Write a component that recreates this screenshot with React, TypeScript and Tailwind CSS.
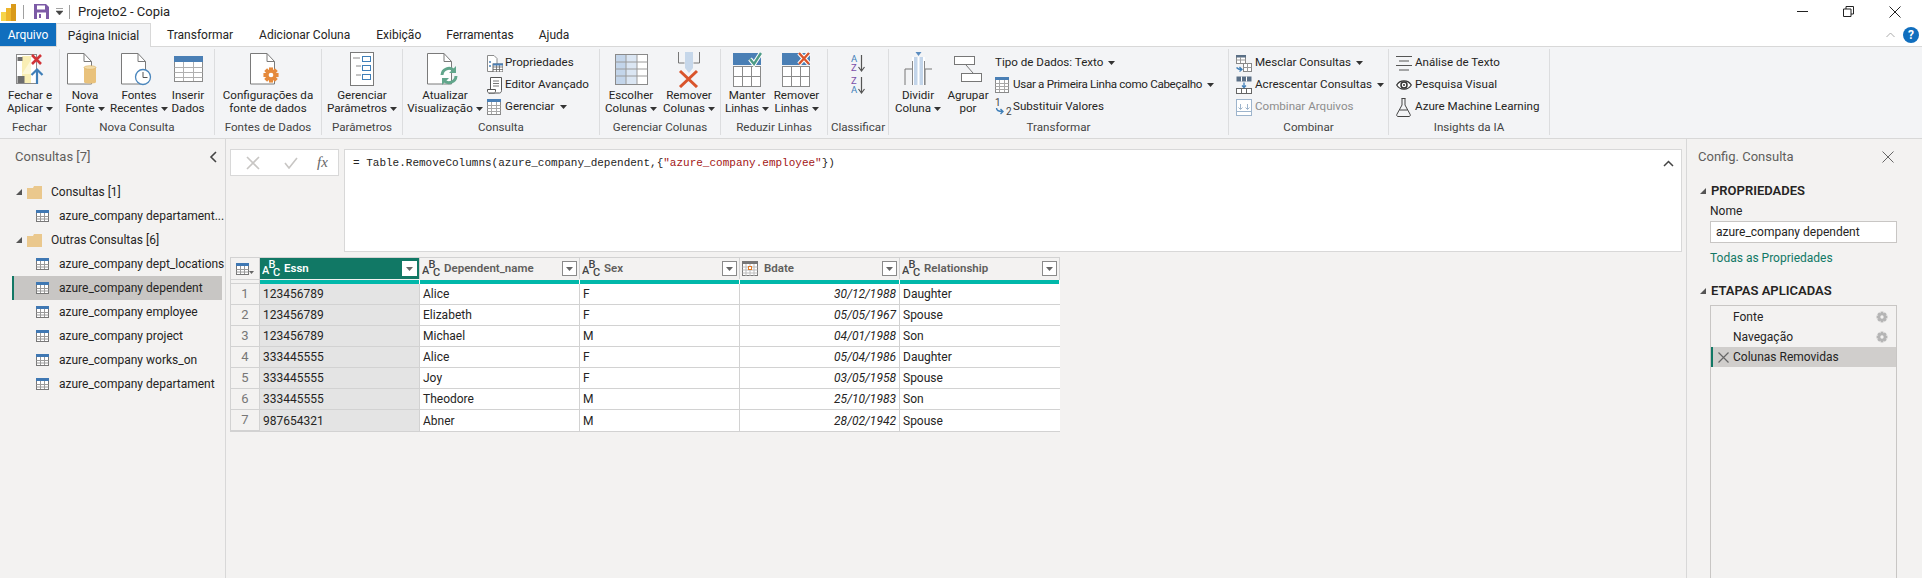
import type { ReactNode } from "react";

const sans = "font-['Roboto',sans-serif]";

function Caret({ color = "#333" }: { color?: string }) {
  return (
    <svg width="7" height="4" viewBox="0 0 7 4" className="inline-block shrink-0">
      <path d="M0 0h7L3.5 4z" fill={color} />
    </svg>
  );
}

function Doc({ children, w = 26, h = 34 }: { children?: ReactNode; w?: number; h?: number }) {
  return (
    <svg width={w + 12} height={h} viewBox={`0 0 ${w + 12} ${h}`} className="block">
      <path d={`M1.5 1.5H${w - 8}L${w - 0.5} 9.5V${h - 2}H1.5z`} fill="#fff" stroke="#7a7a7a" />
      <path d={`M${w - 8} 1.5V9.5H${w - 0.5}`} fill="none" stroke="#7a7a7a" />
      {children}
    </svg>
  );
}

function FecharIcon() {
  return (
    <svg width="28" height="32" viewBox="0 0 28 32" className="block">
      <rect x="0.5" y="1.5" width="20" height="29" fill="#fff" stroke="#8a8a8a" />
      <path d="M6 3h9v27H6z" fill="#f9eeb4" />
      <path d="M6 21l9-14v14z" fill="#fdf7d6" />
      <rect x="1.5" y="4" width="5" height="4" fill="#6d6d6d" />
      <rect x="1.5" y="23" width="7" height="7" fill="#6d6d6d" />
      <path d="M16 2l9 9M25 2l-9 9" stroke="#d13438" strokeWidth="2.6" />
      <path d="M21 31V17M15.5 22l5.5-5.5 5.5 5.5" stroke="#3f7fb8" strokeWidth="2.2" fill="none" />
    </svg>
  );
}

function CylinderDoc() {
  return (
    <Doc>
      <path d="M18 15.5c0-1.5 12-1.5 12 0V30c0 2-12 2-12 0z" fill="#e9c27c" />
      <ellipse cx="24" cy="15.5" rx="6" ry="1.8" fill="#f3dca9" stroke="#d9ae62" strokeWidth="0.6" />
    </Doc>
  );
}

function ClockDoc() {
  return (
    <Doc>
      <circle cx="23" cy="25" r="7.5" fill="#fff" stroke="#4a86bd" strokeWidth="1.3" />
      <path d="M23 20v5.5h4.5" fill="none" stroke="#555" />
    </Doc>
  );
}

function InsertTable() {
  return (
    <svg width="29" height="26" viewBox="0 0 29 26" className="block">
      <rect x="0.5" y="0.5" width="28" height="25" fill="#fff" stroke="#8a8a8a" />
      <rect x="0" y="0" width="29" height="6" fill="#4a7fb5" />
      <path d="M0.5 11.5h28M0.5 16.5h28M0.5 21.5h28M9.5 6v19M19.5 6v19" stroke="#b0b0b0" />
    </svg>
  );
}

function GearGlyph({ x, y, r, color, hole = "#fff" }: { x: number; y: number; r: number; color: string; hole?: string }) {
  const teeth = [0, 45, 90, 135];
  return (
    <g transform={`translate(${x} ${y})`}>
      {teeth.map((a) => (
        <rect key={a} x={-r * 0.36} y={-r * 1.35} width={r * 0.72} height={r * 2.7} fill={color} transform={`rotate(${a})`} />
      ))}
      <circle r={r} fill={color} />
      <circle r={r * 0.42} fill={hole} />
    </g>
  );
}

function GearDoc() {
  return (
    <Doc>
      <GearGlyph x={22} y={23} r={5.6} color="#e58a3c" />
    </Doc>
  );
}

function ParamIcon() {
  return (
    <svg width="24" height="34" viewBox="0 0 24 34" className="block">
      <rect x="0.5" y="0.5" width="23" height="33" fill="#fff" stroke="#7a7a7a" />
      <path d="M3 6h7M6 14h5M6 23h5" stroke="#8a8a8a" />
      <rect x="12.5" y="4.5" width="8" height="5" fill="#fff" stroke="#3f7fb8" />
      <rect x="12.5" y="13.5" width="8" height="5" fill="#fff" stroke="#3f7fb8" />
      <rect x="12.5" y="22.5" width="8" height="5" fill="#fff" stroke="#3f7fb8" />
    </svg>
  );
}

function RefreshDoc() {
  return (
    <Doc>
      <path d="M16 23a7 7 0 0 1 12-4.500M30 24a7 7 0 0 1-12 4.500" fill="none" stroke="#62a68c" strokeWidth="3" />
      <path d="M30 14v7h-7zM16 33v-7h7z" fill="#62a68c" />
    </Doc>
  );
}

function ChooseColumns() {
  return (
    <svg width="33" height="31" viewBox="0 0 33 31" className="block">
      <rect x="0.500" y="0.500" width="32" height="30" fill="#fff" stroke="#8a8a8a" />
      <rect x="1" y="1" width="10" height="29" fill="#c3d5ea" />
      <rect x="11" y="1" width="11" height="29" fill="#dbe6f3" />
      <path d="M0.500 8h32M0.500 15h32M0.500 22h32M11 1v29M22 1v29" stroke="#9a9a9a" />
    </svg>
  );
}

function RemoveColumns() {
  return (
    <svg width="24" height="37" viewBox="0 0 24 37" className="block">
      <path d="M1.500 1v11h6M22.500 1v11h-6" fill="none" stroke="#777" />
      <path d="M8 1h8v16l-4 5-4-5z" fill="#c6d7ea" />
      <path d="M3 20l17 16M20 20L3 36" stroke="#d9542b" strokeWidth="3" />
    </svg>
  );
}

function RowsIcon({ mark }: { mark: "keep" | "remove" }) {
  return (
    <svg width="29" height="36" viewBox="0 0 29 36" className="block">
      <rect x="0" y="2" width="28" height="12" fill="#4a7fb5" />
      <rect x="0.500" y="15.500" width="27" height="20" fill="#fff" stroke="#8a8a8a" />
      <path d="M0.500 25.500h27M9.500 15.500v20M18.500 15.500v20" stroke="#8a8a8a" />
      {mark === "keep" ? (
        <path d="M17 8l4 5 7-11" fill="none" stroke="#fff" strokeWidth="4.500" />
      ) : (
        <path d="M17 2l10 11M27 2L17 13" fill="none" stroke="#fff" strokeWidth="4.500" />
      )}
      {mark === "keep" ? (
        <path d="M17 8l4 5 7-11" fill="none" stroke="#4e9c86" strokeWidth="2.400" />
      ) : (
        <path d="M17 2l10 11M27 2L17 13" fill="none" stroke="#d9542b" strokeWidth="2.400" />
      )}
    </svg>
  );
}

function SortIcon({ top, bottom }: { top: string; bottom: string }) {
  return (
    <svg width="14" height="18" viewBox="0 0 14 18" className="block">
      <text x="0" y="8" fontSize="9.500" fontFamily="Roboto" fill={top === "A" ? "#3f7fb8" : "#7b4fa8"}>{top}</text>
      <text x="0" y="16.500" fontSize="9.500" fontFamily="Roboto" fill={bottom === "A" ? "#3f7fb8" : "#7b4fa8"}>{bottom}</text>
      <path d="M10.500 1v15M7.500 13l3 4 3-4" fill="none" stroke="#555" strokeWidth="1.200" />
    </svg>
  );
}

function SplitIcon() {
  return (
    <svg width="29" height="34" viewBox="0 0 29 34" className="block">
      <path d="M1 33V17h7M28 17h-7v16" fill="none" stroke="#777" />
      <path d="M8 5h13v28H8z" fill="#fff" />
      <path d="M10 5h9v28h-9z" fill="#c3d5ea" />
      <path d="M14.500 5v28" stroke="#fff" strokeWidth="2" />
      <path d="M11.500 0h6l-3 4z" fill="#5b8cc0" />
      <path d="M8.500 9v24M20.500 9v24" stroke="#888" />
    </svg>
  );
}

function GroupIcon() {
  return (
    <svg width="28" height="26" viewBox="0 0 28 26" className="block">
      <rect x="0.500" y="0.500" width="20" height="8" fill="#fff" stroke="#777" />
      <rect x="7.500" y="17.500" width="20" height="8" fill="#fff" stroke="#777" />
      <path d="M12 9l7 8" stroke="#777" fill="none" />
    </svg>
  );
}

function SmallGrid() {
  return (
    <svg width="14" height="16" viewBox="0 0 14 16" className="block">
      <rect x="0.500" y="0.500" width="13" height="15" fill="#fff" stroke="#8a8a8a" />
      <rect x="0" y="0" width="14" height="3" fill="#4a7fb5" />
      <path d="M0.500 6.500h13M0.500 9.500h13M0.500 12.500h13M4.500 3v12M9.500 3v12" stroke="#a8a8a8" />
    </svg>
  );
}

function PropsIcon() {
  return (
    <svg width="16" height="17" viewBox="0 0 16 17" className="block">
      <path d="M0.500 0.500H7L10 3.500V16.500H0.500z" fill="#fff" stroke="#8a8a8a" />
      <circle cx="3" cy="7" r="1" fill="#4a7fb5" />
      <circle cx="3" cy="11" r="1" fill="#4a7fb5" />
      <rect x="6" y="9" width="10" height="8" fill="#fff" stroke="#666" />
      <path d="M6 12h10M6 14.500h10M9.500 9v8M12.500 9v8" stroke="#666" strokeWidth="0.800" />
      <rect x="6" y="8.500" width="10" height="2" fill="#4a7fb5" />
    </svg>
  );
}

function EditorIcon() {
  return (
    <svg width="15" height="17" viewBox="0 0 15 17" className="block">
      <path d="M3.500 0.500H14.500V13.500c0 1.500-1 2.500-2 2.500H2c1.500 0 1.500-1 1.500-2z" fill="#fff" stroke="#555" />
      <path d="M0.500 12.500h8v1.500c0 1-.5 2-1.500 2H2c-1 0-1.500-1-1.500-2z" fill="#fff" stroke="#555" />
      <path d="M6 4h6M6 6.500h6M6 9h6" stroke="#777" />
    </svg>
  );
}

function MergeIcon() {
  return (
    <svg width="16" height="17" viewBox="0 0 16 17" className="block">
      <rect x="0.500" y="0.500" width="9" height="8" fill="#fff" stroke="#888" />
      <rect x="0" y="0" width="10" height="2.500" fill="#5a6f86" />
      <path d="M0.500 5h9M4.500 2v6" stroke="#999" />
      <rect x="7.500" y="8.500" width="8" height="8" fill="#fff" stroke="#888" />
      <path d="M7.500 12.500h8M11.500 8.500v8" stroke="#999" />
      <path d="M0.500 12.500c1.500 2 3 2 5 2M3.500 12l2.500 2.500-2.500 2" stroke="#3f7fb8" fill="none" strokeWidth="1.300" />
    </svg>
  );
}

function AppendIcon() {
  return (
    <svg width="16" height="18" viewBox="0 0 16 18" className="block">
      <rect x="0.500" y="0.500" width="15" height="5" fill="#5a6f86" />
      <path d="M5.500 0.500v5M10.500 0.500v5" stroke="#fff" />
      <rect x="0.500" y="12.500" width="15" height="5" fill="#fff" stroke="#666" />
      <path d="M5.500 12.500v5M10.500 12.500v5" stroke="#666" />
      <path d="M8 6.500v4.500M6 9.500l2 2 2-2" stroke="#3f7fb8" fill="none" strokeWidth="1.300" />
    </svg>
  );
}

function CombineIcon() {
  return (
    <svg width="16" height="17" viewBox="0 0 16 17" className="block">
      <rect x="0.500" y="0.500" width="15" height="16" fill="#fff" stroke="#9db4cc" />
      <path d="M0.500 12.500h15M4.500 5v5M2.500 8.500l2 2 2-2M11.500 5v5M9.500 8.500l2 2 2-2" stroke="#9db4cc" fill="none" />
    </svg>
  );
}

function ReplaceIcon() {
  return (
    <svg width="18" height="18" viewBox="0 0 18 18" className="block">
      <text x="0" y="8" fontSize="10" fontFamily="Roboto" fill="#444">1</text>
      <text x="11" y="17" fontSize="10" fontFamily="Roboto" fill="#444">2</text>
      <path d="M1.500 10c0 3 2 3.500 6 3.500M5.500 11l2.500 2.500L5.500 16" fill="none" stroke="#3f7fb8" strokeWidth="1.400" />
    </svg>
  );
}

function LinesIcon() {
  return (
    <svg width="16" height="17" viewBox="0 0 16 17" className="block">
      <path d="M0 1.500h16M3 6h10M0 10.500h16M3 15h10" stroke="#555" />
    </svg>
  );
}

function EyeIcon() {
  return (
    <svg width="16" height="12" viewBox="0 0 16 12" className="block">
      <path d="M0.700 6C4 .5 12 .5 15.300 6 12 11.500 4 11.500 0.700 6z" fill="#fff" stroke="#333" strokeWidth="1.200" />
      <circle cx="8" cy="6" r="3" fill="none" stroke="#333" strokeWidth="1.500" />
      <circle cx="8" cy="6" r="1" fill="#333" />
    </svg>
  );
}

function FlaskIcon() {
  return (
    <svg width="15" height="19" viewBox="0 0 15 19" className="block">
      <path d="M5.500 0.500h4M6 0.500V7L0.800 16.500c-.4 1 .2 2 1.200 2h11c1 0 1.600-1 1.200-2L9 7V0.500" fill="none" stroke="#444" />
      <path d="M3.500 12h8" stroke="#444" />
    </svg>
  );
}

function Group({ label, width, children, row = true }: { label: string; width: number; children: ReactNode; row?: boolean }) {
  return (
    <div style={{ width }} className="flex h-[86px] shrink-0 flex-col border-r border-[#dcdddf]">
      <div className={row ? "flex h-[72px] items-start" : "h-[72px]"}>{children}</div>
      <div className="flex h-[14px] items-center justify-center text-[#444] whitespace-nowrap">{label}</div>
    </div>
  );
}

function BigBtn({ w, icon, l1, l2, caret }: { w: number; icon: ReactNode; l1: string; l2: string; caret?: boolean }) {
  return (
    <div style={{ width: w }} className="flex shrink-0 flex-col items-center">
      <div className="flex h-[40px] items-center justify-center">{icon}</div>
      <div className="text-center leading-[13px] whitespace-nowrap">{l1}</div>
      <div className="flex items-center justify-center gap-[3px] leading-[13px] whitespace-nowrap">
        {l2}
        {caret && <Caret />}
      </div>
    </div>
  );
}

function SmallBtn({ icon, text, caret, iconW = 18, muted, tight }: { icon?: ReactNode; text: string; caret?: boolean; iconW?: number; muted?: boolean; tight?: boolean }) {
  return (
    <div className={`flex h-[22px] items-center whitespace-nowrap ${muted ? "text-[#8d8d8d]" : ""}`}>
      {icon && <div style={{ width: iconW }} className="flex shrink-0 items-center">{icon}</div>}
      <span className={tight ? "tracking-[-0.3px]" : ""}>{text}</span>
      {caret && <span className="ml-[5px] flex"><Caret /></span>}
    </div>
  );
}

function TableGlyph() {
  return (
    <svg width="13" height="12" viewBox="0 0 13 12" className="block shrink-0">
      <rect x="0.500" y="0.500" width="12" height="11" fill="#fff" stroke="#777" />
      <rect x="0" y="0" width="13" height="3" fill="#3f78b3" />
      <path d="M0.500 6.500h12M0.500 9h12M4.500 3v8M8.500 3v8" stroke="#9a9a9a" />
    </svg>
  );
}

function Folder() {
  return (
    <svg width="15" height="13" viewBox="0 0 15 13" className="block shrink-0">
      <path d="M0 2h6l1-2h8v13H0z" fill="#eac88d" />
    </svg>
  );
}

function TreeArrow() {
  return (
    <svg width="6" height="6" viewBox="0 0 6 6" className="block shrink-0">
      <path d="M6 0v6H0z" fill="#555" />
    </svg>
  );
}

function AbcIcon({ color = "#444" }: { color?: string }) {
  return (
    <svg width="19" height="20" viewBox="0 0 19 20" className="block shrink-0">
      <text x="0" y="15" fontSize="11" fontFamily="Roboto" fontWeight="500" fill={color}>A</text>
      <text x="6.500" y="9" fontSize="11" fontFamily="Roboto" fontWeight="500" fill={color}>B</text>
      <text x="11" y="17" fontSize="11" fontFamily="Roboto" fontWeight="500" fill={color}>C</text>
    </svg>
  );
}

function DateIcon() {
  return (
    <svg width="16" height="15" viewBox="0 0 16 15" className="mr-[3px] block shrink-0">
      <rect x="0.500" y="0.500" width="15" height="14" fill="#fff" stroke="#777" />
      <rect x="0" y="0" width="16" height="3" fill="#777" />
      <path d="M0.500 6h15M0.500 9h15M0.500 12h15M4 3v12M8 3v12M12 3v12" stroke="#bbb" />
      <rect x="6.500" y="5.500" width="3" height="3" fill="#fff" stroke="#e07b28" />
    </svg>
  );
}

function FilterBtn({ active }: { active?: boolean }) {
  return (
    <div className={`flex h-[15px] w-[15px] shrink-0 items-center justify-center border ${active ? "border-white bg-white" : "border-[#8a8a8a] bg-white"}`}>
      <svg width="7" height="4" viewBox="0 0 7 4" className="block">
        <path d="M0 0h7L3.500 4z" fill="#666" />
      </svg>
    </div>
  );
}

const queries = ["azure_company dept_locations", "azure_company dependent", "azure_company employee", "azure_company project", "azure_company works_on", "azure_company departament"];

const rows = [
  ["123456789", "Alice", "F", "30/12/1988", "Daughter"],
  ["123456789", "Elizabeth", "F", "05/05/1967", "Spouse"],
  ["123456789", "Michael", "M", "04/01/1988", "Son"],
  ["333445555", "Alice", "F", "05/04/1986", "Daughter"],
  ["333445555", "Joy", "F", "03/05/1958", "Spouse"],
  ["333445555", "Theodore", "M", "25/10/1983", "Son"],
  ["987654321", "Abner", "M", "28/02/1942", "Spouse"],
];

const columns = [
  { name: "Essn", active: true },
  { name: "Dependent_name" },
  { name: "Sex" },
  { name: "Bdate", date: true },
  { name: "Relationship" },
];

export default function App() {
  return (
    <div className={`flex h-[578px] w-[1922px] flex-col overflow-hidden bg-[#f3f2f1] text-[12px] text-[#252423] ${sans}`}>
      {/* Title bar */}
      <div className="flex h-[23px] items-center bg-white">
        <svg width="16" height="18" viewBox="0 0 16 18" className="ml-px block">
          <rect x="0" y="9" width="5" height="9" fill="#f6d44a" />
          <rect x="5" y="5" width="5" height="13" fill="#edb52c" />
          <rect x="10" y="1" width="5" height="17" fill="#d99a1a" />
        </svg>
        <div className="ml-[6px] h-[14px] w-px bg-[#a0a0a0]" />
        <svg width="15" height="15" viewBox="0 0 15 15" className="ml-[10px] block">
          <path d="M0 0h12l3 3v12H0z" fill="#7c5aa6" />
          <rect x="3" y="1.500" width="8" height="4" fill="#fff" />
          <rect x="3" y="8.500" width="9" height="6.500" fill="#fff" />
          <rect x="5" y="10" width="2" height="4" fill="#7c5aa6" />
        </svg>
        <svg width="7" height="8" viewBox="0 0 7 8" className="ml-[7px] block">
          <path d="M0 .5h7M0 3h7L3.500 7z" fill="#444" stroke="#444" strokeWidth="0.500" />
        </svg>
        <div className="ml-[6px] h-[14px] w-px bg-[#a0a0a0]" />
        <span className="ml-[8px] text-[13px]">Projeto2 - Copia</span>
        <div className="ml-auto flex items-center">
          <svg width="11" height="11" viewBox="0 0 11 11" className="mr-[35px] block">
            <path d="M0 5.500h11" stroke="#222" />
          </svg>
          <svg width="11" height="11" viewBox="0 0 11 11" className="mr-[35px] block">
            <path d="M.5 3h7.500v7.500H.5zM3 3V.5h7.500V8H8" fill="none" stroke="#222" />
          </svg>
          <svg width="12" height="12" viewBox="0 0 12 12" className="mr-[21px] block">
            <path d="M.5.500l11 11M11.500.500l-11 11" stroke="#222" />
          </svg>
        </div>
      </div>

      {/* Tabs */}
      <div className="flex h-[23px] items-stretch bg-white">
        <div className="flex w-[56px] items-center justify-center bg-[#106ebe] text-white">Arquivo</div>
        <div className="z-10 -mb-px flex w-[95px] items-center justify-center border-x border-t border-[#d8d8d8] bg-[#f3f4f6]">Página Inicial</div>
        <div className="flex items-center pl-[16px]">Transformar</div>
        <div className="flex items-center pl-[26px]">Adicionar Coluna</div>
        <div className="flex items-center pl-[26px]">Exibição</div>
        <div className="flex items-center pl-[25px]">Ferramentas</div>
        <div className="flex items-center pl-[25px]">Ajuda</div>
        <div className="ml-auto flex items-center">
          <svg width="9" height="6" viewBox="0 0 9 6" className="mr-[8px] block">
            <path d="M.5 5L4.500 1l4 4" fill="none" stroke="#aaa" />
          </svg>
          <div className="mr-[3px] flex h-[16px] w-[16px] items-center justify-center rounded-full bg-[#106ebe] text-[12px] font-bold text-white">?</div>
        </div>
      </div>

      {/* Ribbon */}
      <div className="flex h-[93px] shrink-0 border-y border-[#d8d8d8] bg-[#f3f4f6] pt-[2px] text-[11.6px] text-[#252423]">
        <Group label="Fechar" width={60}>
          <BigBtn w={60} icon={<FecharIcon />} l1="Fechar e" l2="Aplicar" caret />
        </Group>
        <Group label="Nova Consulta" width={155}>
          <div className="w-[3px]" />
          <BigBtn w={44} icon={<CylinderDoc />} l1="Nova" l2="Fonte" caret />
          <BigBtn w={64} icon={<ClockDoc />} l1="Fontes" l2="Recentes" caret />
          <BigBtn w={34} icon={<InsertTable />} l1="Inserir" l2="Dados" />
        </Group>
        <Group label="Fontes de Dados" width={107}>
          <BigBtn w={106} icon={<GearDoc />} l1="Configurações da" l2="fonte de dados" />
        </Group>
        <Group label="Parâmetros" width={81}>
          <BigBtn w={80} icon={<ParamIcon />} l1="Gerenciar" l2="Parâmetros" caret />
        </Group>
        <Group label="Consulta" width={197}>
          <BigBtn w={84} icon={<RefreshDoc />} l1="Atualizar" l2="Visualização" caret />
          <div className="pt-[3px]">
            <SmallBtn icon={<PropsIcon />} text="Propriedades" />
            <SmallBtn icon={<EditorIcon />} text="Editor Avançado" />
            <SmallBtn icon={<SmallGrid />} text="Gerenciar" caret />
          </div>
        </Group>
        <Group label="Gerenciar Colunas" width={121}>
          <BigBtn w={62} icon={<ChooseColumns />} l1="Escolher" l2="Colunas" caret />
          <BigBtn w={54} icon={<RemoveColumns />} l1="Remover" l2="Colunas" caret />
        </Group>
        <Group label="Reduzir Linhas" width={107}>
          <BigBtn w={52} icon={<RowsIcon mark="keep" />} l1="Manter" l2="Linhas" caret />
          <BigBtn w={47} icon={<RowsIcon mark="remove" />} l1="Remover" l2="Linhas" caret />
        </Group>
        <Group label="Classificar" width={61}>
          <div className="flex w-full flex-col items-center pt-[3px]">
            <div className="flex h-[22px] items-center"><SortIcon top="A" bottom="Z" /></div>
            <div className="flex h-[22px] items-center"><SortIcon top="Z" bottom="A" /></div>
          </div>
        </Group>
        <Group label="Transformar" width={340}>
          <BigBtn w={58} icon={<SplitIcon />} l1="Dividir" l2="Coluna" caret />
          <BigBtn w={42} icon={<GroupIcon />} l1="Agrupar" l2="por" />
          <div className="pl-[6px] pt-[3px]">
            <SmallBtn text="Tipo de Dados: Texto" caret />
            <SmallBtn icon={<SmallGrid />} text="Usar a Primeira Linha como Cabeçalho" tight caret />
            <SmallBtn icon={<ReplaceIcon />} text="Substituir Valores" iconW={18} />
          </div>
        </Group>
        <Group label="Combinar" width={160}>
          <div className="pl-[7px] pt-[3px]">
            <SmallBtn icon={<MergeIcon />} text="Mesclar Consultas" iconW={19} caret />
            <SmallBtn icon={<AppendIcon />} text="Acrescentar Consultas" iconW={19} caret />
            <SmallBtn icon={<CombineIcon />} text="Combinar Arquivos" iconW={19} muted />
          </div>
        </Group>
        <Group label="Insights da IA" width={161}>
          <div className="pl-[7px] pt-[3px]">
            <SmallBtn icon={<LinesIcon />} text="Análise de Texto" iconW={19} />
            <SmallBtn icon={<EyeIcon />} text="Pesquisa Visual" iconW={19} />
            <SmallBtn icon={<FlaskIcon />} text="Azure Machine Learning" iconW={19} />
          </div>
        </Group>
      </div>

      {/* Body */}
      <div className="flex min-h-0 flex-1">
        {/* Queries */}
        <div className="w-[226px] shrink-0 border-r border-[#d8d8d8]">
          <div className="flex h-[41px] items-center justify-between pb-[5px] pl-[15px] pr-[8px]">
            <span className="text-[13px] text-[#605e5c]">Consultas [7]</span>
            <svg width="8" height="12" viewBox="0 0 8 12" className="block">
              <path d="M7 1L2 6l5 5" fill="none" stroke="#444" strokeWidth="1.600" />
            </svg>
          </div>
          <div className="flex h-[24px] items-center pl-[16px]">
            <TreeArrow />
            <div className="ml-[5px]"><Folder /></div>
            <span className="ml-[9px]">Consultas [1]</span>
          </div>
          <div className="flex h-[24px] items-center pl-[36px]">
            <TableGlyph />
            <span className="ml-[10px] whitespace-nowrap">azure_company departament...</span>
          </div>
          <div className="flex h-[24px] items-center pl-[16px]">
            <TreeArrow />
            <div className="ml-[5px]"><Folder /></div>
            <span className="ml-[9px]">Outras Consultas [6]</span>
          </div>
          {queries.map((q) => {
            const selected = q === "azure_company dependent";
            return (
              <div key={q} className={`ml-[12px] mr-[3px] flex h-[24px] items-center ${selected ? "border-l-2 border-[#117865] bg-[#c8c6c4] pl-[22px]" : "pl-[24px]"}`}>
                <TableGlyph />
                <span className="ml-[10px] whitespace-nowrap">{q}</span>
              </div>
            );
          })}
        </div>

        {/* Formula bar and grid */}
        <div className="flex min-w-0 flex-1 flex-col pl-[4px] pr-[4px] pt-[10px]">
          <div className="flex gap-[5px]">
            <div className="flex h-[27px] w-[109px] shrink-0 items-center border border-[#d8d8d8] bg-white">
              <svg width="14" height="14" viewBox="0 0 14 14" className="ml-[15px] block">
                <path d="M1 1l12 12M13 1L1 13" stroke="#c8c6c4" strokeWidth="1.600" />
              </svg>
              <svg width="14" height="12" viewBox="0 0 14 12" className="ml-[24px] block">
                <path d="M1 6l4 5 8-10" fill="none" stroke="#c8c6c4" strokeWidth="1.600" />
              </svg>
              <span className="ml-[19px] font-['Liberation_Serif',serif] text-[15px] italic text-[#666]">fx</span>
            </div>
            <div className="relative h-[103px] flex-1 border border-[#d8d8d8] bg-white pl-[8px] pt-[5px] font-['Liberation_Mono',monospace] text-[11px] leading-[17px]">
              <span>= Table.RemoveColumns(azure_company_dependent,{"{"}</span>
              <span className="text-[#a31515]">"azure_company.employee"</span>
              <span>{"}"})</span>
              <svg width="11" height="7" viewBox="0 0 11 7" className="absolute right-[7px] top-[10px] block">
                <path d="M1 6l4.500-4.500L10 6" fill="none" stroke="#444" strokeWidth="1.500" />
              </svg>
            </div>
          </div>

          <div className="mt-[5px] grid w-[830px] grid-cols-[29px_repeat(5,160px)] border border-[#d2d2d2] border-b-[#d2d2d2]">
            {/* Header row */}
            <div className="flex h-[21px] items-center border-r border-[#d2d2d2] pl-[5px]">
              <svg width="18" height="12" viewBox="0 0 18 12" className="block">
                <rect x="0.500" y="0.500" width="12" height="11" fill="#fff" stroke="#777" />
                <rect x="0" y="0" width="13" height="3" fill="#3f78b3" />
                <path d="M0.500 6.500h12M0.500 9h12M4.500 3v8M8.500 3v8" stroke="#9a9a9a" />
                <path d="M13 8h5l-2.500 3z" fill="#666" />
              </svg>
            </div>
            {columns.map((c) => (
              <div key={c.name} className={`flex h-[21px] items-center border-r border-[#d2d2d2] pl-[2px] pr-[2px] last:border-r-0 ${c.active ? "bg-[#117865] font-semibold text-white" : "font-semibold text-[#605e5c]"}`}>
                {c.date ? <DateIcon /> : <AbcIcon color={c.active ? "#fff" : "#444"} />}
                <span className="ml-[3px] text-[11.500px]">{c.name}</span>
                <div className="ml-auto"><FilterBtn active={c.active} /></div>
              </div>
            ))}
            {/* Quality bar */}
            <div className="h-[5px] border-y border-r border-[#d2d2d2]" />
            {columns.map((c) => (
              <div key={c.name} className="mt-px h-[4px] border-r border-white bg-[#01b8aa] last:border-r-0" />
            ))}
            {/* Data */}
            {rows.map((r, i) => (
              <div key={i} className="contents">
                <div className="flex h-[21px] items-center justify-center border-r border-b border-[#d2d2d2] text-[13px] text-[#777] last:border-b-0">{i + 1}</div>
                {r.map((v, j) => (
                  <div key={j} className={`flex h-[21px] items-center border-r border-b border-[#d2d2d2] px-[3px] ${j === 0 ? "bg-[#e4e4e4]" : "bg-white"} ${j === 3 ? "justify-end italic" : ""} ${j === 4 ? "border-r-0" : ""} ${i === 6 ? "border-b-0" : ""}`}>
                    {v}
                  </div>
                ))}
              </div>
            ))}
          </div>
        </div>

        {/* Query settings */}
        <div className="w-[236px] shrink-0 border-l border-[#d8d8d8]">
          <div className="flex h-[36px] items-center justify-between pl-[11px] pr-[28px]">
            <span className="text-[13px] text-[#605e5c]">Config. Consulta</span>
            <svg width="12" height="12" viewBox="0 0 12 12" className="block">
              <path d="M.5.500l11 11M11.500.500l-11 11" stroke="#666" />
            </svg>
          </div>
          <div className="mt-[7px] flex h-[18px] items-center pl-[13px]">
            <TreeArrow />
            <span className="ml-[5px] text-[13px] font-semibold">PROPRIEDADES</span>
          </div>
          <div className="pl-[23px] pr-[25px]">
            <div className="mt-[3px] h-[17px] leading-[17px]">Nome</div>
            <div className="mt-[1px] flex h-[22px] items-center border border-[#c8c6c4] bg-white pl-[5px]">azure_company dependent</div>
            <div className="mt-[7px] h-[17px] leading-[17px] text-[#117865]">Todas as Propriedades</div>
          </div>
          <div className="mt-[15px] flex h-[18px] items-center pl-[13px]">
            <TreeArrow />
            <span className="ml-[5px] text-[13px] font-semibold">ETAPAS APLICADAS</span>
          </div>
          <div className="ml-[23px] mr-[25px] mt-[5px] h-[300px] border border-[#c8c6c4] bg-[#f3f2f1] pt-[1px]">
            {["Fonte", "Navegação"].map((s) => (
              <div key={s} className="flex h-[20px] items-center pl-[22px] pr-[8px]">
                <span>{s}</span>
                <svg width="12" height="12" viewBox="-6 -6 12 12" className="ml-auto block">
                  <GearGlyph x={0} y={0} r={4} color="#b5b5b5" hole="#f3f2f1" />
                </svg>
              </div>
            ))}
            <div className="flex h-[20px] items-center border-l-2 border-[#117865] bg-[#d0cecc] pl-[5px]">
              <svg width="11" height="11" viewBox="0 0 11 11" className="block">
                <path d="M.5.500l10 10M10.500.500l-10 10" stroke="#666" strokeWidth="1.200" />
              </svg>
              <span className="ml-[4px]">Colunas Removidas</span>
            </div>
          </div>
        </div>
      </div>
    </div>
  );
}
